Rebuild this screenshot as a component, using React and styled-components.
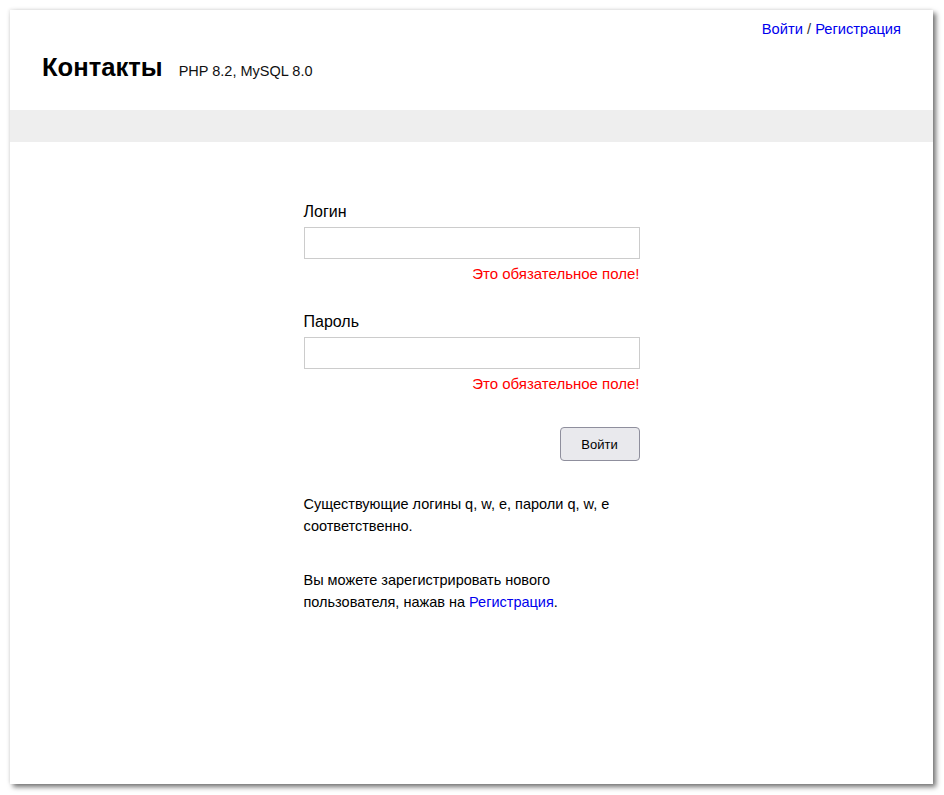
import React from "react";
import styled, { createGlobalStyle } from "styled-components";

const Global = createGlobalStyle`
  html, body { margin: 0; padding: 0; background: #ffffff; }
  body { font-family: "Liberation Sans", Arial, sans-serif; color: #000; }
`;

const Stage = styled.div`
  width: 944px;
  height: 795px;
  padding: 10px 0 0 10px;
  box-sizing: border-box;
  overflow: hidden;
`;

const Window = styled.div`
  width: 923px;
  height: 774px;
  background: #fff;
  box-shadow: 3px 3px 5px rgba(0, 0, 0, 0.55), -1px -1px 3px rgba(0, 0, 0, 0.08);
  display: flex;
  flex-direction: column;
`;

const Header = styled.header`
  height: 100px;
  box-sizing: border-box;
  padding: 10px 32px 0 32px;
  display: flex;
  flex-direction: column;
`;

const TopNav = styled.nav`
  align-self: flex-end;
  font-size: 14.7px;
  line-height: 18px;
  color: #333;
`;

const Link = styled.a`
  color: #0000ee;
  text-decoration: none;
`;

const TitleRow = styled.div`
  display: flex;
  align-items: baseline;
  gap: 16px;
  margin-top: 14px;
`;

const Title = styled.h1`
  margin: 0;
  font-size: 25.6px;
  line-height: 30px;
  font-weight: bold;
`;

const Subtitle = styled.span`
  font-size: 14.5px;
  color: #111;
`;

const Bar = styled.div`
  height: 32px;
  background: #eeeeee;
`;

const Main = styled.main`
  display: flex;
  justify-content: center;
  padding-top: 60px;
  padding-right: 1px;
`;

const Form = styled.form`
  width: 336px;
  display: flex;
  flex-direction: column;
  margin-left: 1px;
`;

const Label = styled.label`
  font-size: 16px;
  line-height: 20px;
  margin-top: ${(p) => p.$mt || 0}px;
`;

const Input = styled.input`
  margin-top: 5px;
  height: 32px;
  box-sizing: border-box;
  border: 1px solid #cccccc;
  outline: none;
  padding: 0 8px;
  font-size: 14px;
  background: #fff;
`;

const Error = styled.div`
  align-self: flex-end;
  color: #ff0000;
  font-size: 15px;
  line-height: 18px;
  margin-top: 6px;
`;

const Button = styled.button`
  align-self: flex-end;
  margin-top: 34px;
  width: 80px;
  height: 34px;
  box-sizing: border-box;
  background: #e9e9ed;
  border: 1px solid #8f8f9d;
  border-radius: 4px;
  font-family: "Liberation Sans", Arial, sans-serif;
  font-size: 13px;
  color: #000;
  padding: 0;
`;

const Note = styled.p`
  margin: ${(p) => p.$mt || 0}px 0 0 0;
  font-size: 14.5px;
  line-height: 22px;
`;

export default function App() {
  return (
    <>
      <Global />
      <Stage>
        <Window>
          <Header>
            <TopNav>
              <Link href="#">Войти</Link> / <Link href="#">Регистрация</Link>
            </TopNav>
            <TitleRow>
              <Title>Контакты</Title>
              <Subtitle>PHP 8.2, MySQL 8.0</Subtitle>
            </TitleRow>
          </Header>
          <Bar />
          <Main>
            <Form onSubmit={(e) => e.preventDefault()}>
              <Label>Логин</Label>
              <Input type="text" />
              <Error>Это обязательное поле!</Error>
              <Label $mt={29}>Пароль</Label>
              <Input type="password" />
              <Error>Это обязательное поле!</Error>
              <Button type="submit">Войти</Button>
              <Note $mt={32}>
                Существующие логины q, w, e, пароли q, w, e соответственно.
              </Note>
              <Note $mt={32}>
                Вы можете зарегистрировать нового пользователя, нажав на{" "}
                <Link href="#">Регистрация</Link>.
              </Note>
            </Form>
          </Main>
        </Window>
      </Stage>
    </>
  );
}
